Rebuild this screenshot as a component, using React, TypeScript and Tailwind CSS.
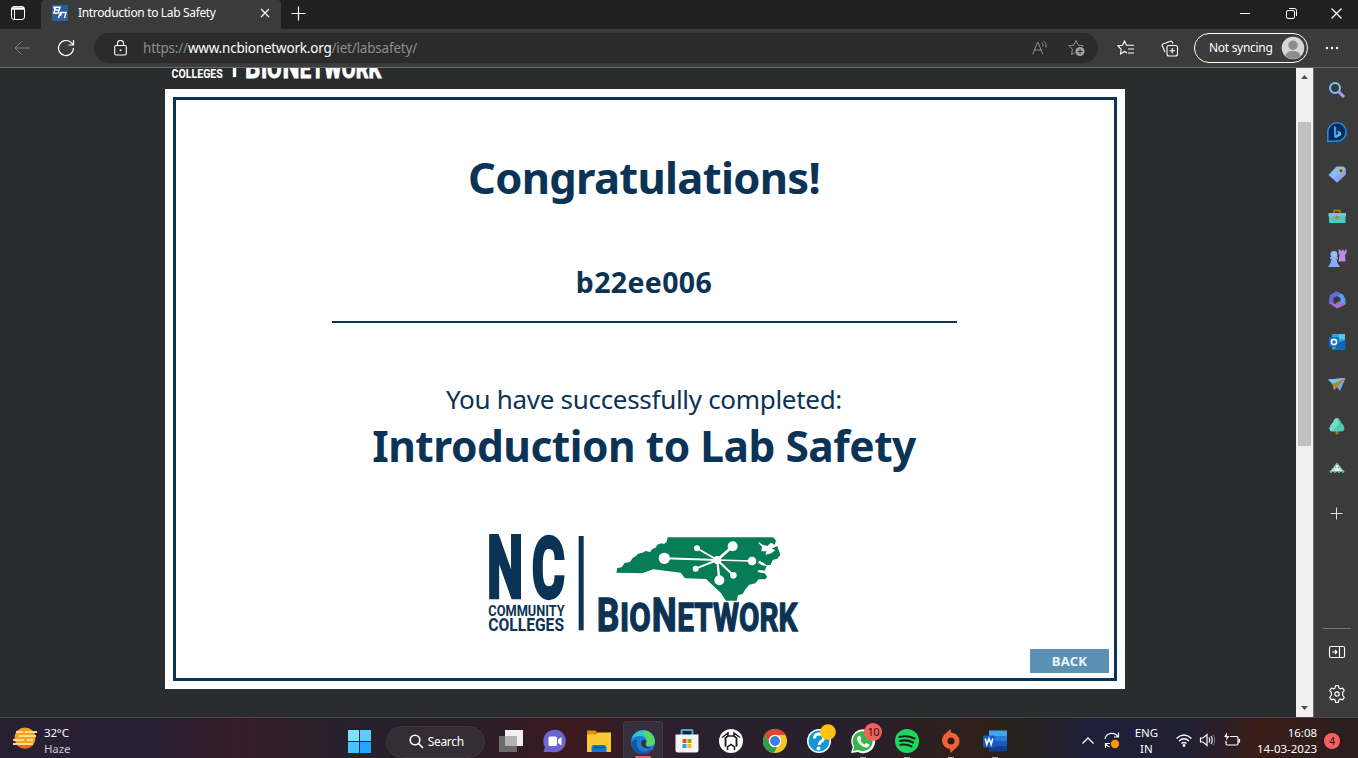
import type { ReactNode } from "react";

type IconProps = { w?: number; h?: number; vb?: string; children: ReactNode; className?: string };

function Svg({ w = 20, h = 20, vb, children, className = "" }: IconProps) {
  return (
    <svg width={w} height={h} viewBox={vb ?? `0 0 ${w} ${h}`} fill="none" className={`block shrink-0 ${className}`}>
      {children}
    </svg>
  );
}

const logoFont = "Roboto, 'Liberation Sans', sans-serif";

function LogoBase({ color }: { color: string }) {
  return (
    <g fill={color} fontFamily={logoFont} fontWeight="700" stroke={color}>
      <text x="55" y="334" fontSize="56" strokeWidth="0" textLength="227" lengthAdjust="spacingAndGlyphs">COLLEGES</text>
      <rect x="326" y="48" width="15" height="283" stroke="none" />
      <text x="380" y="333" fontSize="141" strokeWidth="4" textLength="68" lengthAdjust="spacingAndGlyphs">B</text>
      <text x="450" y="333" fontSize="115" strokeWidth="4" textLength="92" lengthAdjust="spacingAndGlyphs">IO</text>
      <text x="545" y="333" fontSize="141" strokeWidth="4" textLength="75" lengthAdjust="spacingAndGlyphs">N</text>
      <text x="622" y="333" fontSize="115" strokeWidth="4" textLength="360" lengthAdjust="spacingAndGlyphs">ETWORK</text>
    </g>
  );
}

function HeaderLogo() {
  return (
    <svg width="231" height="20" viewBox="0 260 1020 88" className="block shrink-0">
      <LogoBase color="#ffffff" />
    </svg>
  );
}

const nodes = [
  [583, 115, 17, 6],
  [681, 85, 9, 5],
  [788, 79, 15, 8],
  [846, 123, 13, 5],
  [790, 166, 10, 6],
  [748, 181, 15, 7],
  [677, 146, 9, 6],
];

function CertificateLogo() {
  const color = "#0b3355";
  return (
    <svg width="340" height="125" viewBox="0 0 1020 375" className="block shrink-0">
      <path
        fill="#067d56"
        d="M439 158L442 144 455 142 464 129 480 126 488 114 498 108 504 101 518 98 526 93 540 96 548 86 556 84 562 74 574 70 582 72 590 66 593 52 910 52 918 62 914 74 903 68 892 78 878 74 866 66 866 70 876 80 874 94 890 94 886 104 904 100 916 90 904 86 922 78 928 96 931 104 922 116 908 120 902 134 890 136 880 128 868 122 864 128 876 136 890 138 884 152 866 150 862 156 884 160 892 170 886 178 866 178 856 190 838 194 826 208 818 222 804 226 800 242 768 242 752 218 728 196 708 177 645 175 632 158 550 148 516 160z"
      />
      {nodes.map(([x, y, r, s]) => (
        <g key={`${x}-${y}`}>
          <line x1="742" y1="120" x2={x} y2={y} stroke="#fff" strokeWidth={s} />
          <circle cx={x} cy={y} r={r} fill="#fff" />
        </g>
      ))}
      <circle cx="742" cy="120" r="12" fill="#fff" />
      <g fill={color} fontFamily={logoFont} fontWeight="700" stroke={color}>
        <text x="52" y="231" fontSize="253" strokeWidth="13" textLength="107" lengthAdjust="spacingAndGlyphs">N</text>
        <text x="186" y="232" fontSize="251" strokeWidth="13" textLength="98" lengthAdjust="spacingAndGlyphs">C</text>
        <text x="55" y="287" fontSize="43" strokeWidth="0" textLength="229" lengthAdjust="spacingAndGlyphs">COMMUNITY</text>
      </g>
      <LogoBase color={color} />
    </svg>
  );
}

function TabBar() {
  return (
    <div className="flex h-[29px] items-stretch bg-[#202020]">
      <div className="flex w-[41px] items-center pl-[10px] pb-[3px]">
        <Svg w={16} h={16}>
          <rect x="1.5" y="1.5" width="13" height="13" rx="2.5" stroke="#fff" />
          <path d="M2 3.500h12" stroke="#fff" strokeWidth="2.500" />
          <path d="M4.500 3v11.500" stroke="#fff" />
        </Svg>
      </div>
      <div className="flex w-[240px] items-center rounded-t-[4px] bg-[#3b3b3b] pl-[11px] pb-[3px]">
        <Svg w={16} h={16}>
          <rect width="16" height="16" fill="#2d5f9e" />
          <path d="M2 2.200h6L7 5H3zM3.500 2.200L1.800 8h4.500L7 5M8.500 7L6.500 13M8 7.500h6L12.500 13M9.500 7l-1 4" stroke="#fff" strokeWidth="1.400" />
        </Svg>
        <span className="ml-[10px] w-[181px] whitespace-nowrap font-['Noto_Sans',sans-serif] text-[12px] tracking-[-0.34px] text-white">
          Introduction to Lab Safety
        </span>
        <Svg w={10} h={10} className="ml-[1px]">
          <path d="M1 1l8 8M9 1l-8 8" stroke="#fff" strokeWidth="1.200" />
        </Svg>
      </div>
      <div className="flex w-[34px] items-center justify-center pb-[3px]">
        <Svg w={15} h={15}>
          <path d="M7.500 0.500v14M0.500 7.500h14" stroke="#fff" strokeWidth="1.200" />
        </Svg>
      </div>
      <div className="ml-auto flex items-center pb-[3px]">
        <div className="flex w-[46px] justify-center">
          <Svg w={10} h={10}><path d="M0 5.500h10" stroke="#fff" /></Svg>
        </div>
        <div className="flex w-[46px] justify-center">
          <Svg w={11} h={11}>
            <rect x="0.500" y="2.500" width="8" height="8" rx="1.500" stroke="#fff" />
            <path d="M3 0.500h5.500a2 2 0 0 1 2 2V8" stroke="#fff" />
          </Svg>
        </div>
        <div className="flex w-[44px] justify-center">
          <Svg w={11} h={11}><path d="M0.500 0.500l10 10M10.500 0.500l-10 10" stroke="#fff" strokeWidth="1.200" /></Svg>
        </div>
      </div>
    </div>
  );
}

function Toolbar() {
  return (
    <div className="flex h-[39px] items-center border-b border-[#6b6b6b] bg-[#3b3b3b]">
      <div className="flex w-11 justify-center">
        <Svg w={16} h={14}><path d="M16 7H1M7.500 0.500L1 7l6.500 6.500" stroke="#858585" /></Svg>
      </div>
      <div className="flex w-11 justify-center">
        <Svg w={18} h={18}>
          <path d="M16.500 9a7.500 7.500 0 1 1-2.300-5.400L16 5.500M16.500 1v5h-5" stroke="#fff" strokeWidth="1.200" />
        </Svg>
      </div>
      <div className="ml-[6px] flex h-[30px] w-[1004px] items-center rounded-full bg-[#2b2b2b]">
        <div className="flex w-[49px] justify-center pl-[3px]">
          <Svg w={13} h={16}>
            <rect x="0.700" y="5.500" width="11.600" height="9.500" rx="1.500" stroke="#fff" strokeWidth="1.100" />
            <path d="M3.500 5.500V3.500a3 3 0 0 1 6 0v2" stroke="#fff" strokeWidth="1.100" />
            <circle cx="6.500" cy="10.200" r="1" fill="#fff" />
          </Svg>
        </div>
        <span className="whitespace-nowrap font-['Noto_Sans',sans-serif] text-[13.5px] tracking-[-0.2px] text-[#8e8e8e]">
          https://<span className="text-white">www.ncbionetwork.org</span>/iet/labsafety/
        </span>
        <div className="ml-auto flex w-[37px] justify-center">
          <Svg w={16} h={16}>
            <path d="M0.800 14L5.500 2.500h.6L10.800 14M2.500 10h6.600M9.500 2.500q2 1.500 1.500 4M11.500 0.800q3.500 2.500 2.500 6.700" stroke="#909090" />
          </Svg>
        </div>
        <div className="mr-[3px] flex w-[37px] justify-center">
          <Svg w={19} h={18}>
            <path d="M9 1.500l2.200 4.700 5 .6-3.700 3.500 1 5.200L9 13l-4.500 2.500 1-5.200L1.800 6.800l5-.6z" stroke="#909090" />
            <circle cx="13" cy="12.500" r="5.600" fill="#2b2b2b" />
            <circle cx="13" cy="12.500" r="4.600" fill="#a0a0a0" />
            <path d="M13 10v5M10.500 12.500h5" stroke="#2b2b2b" />
          </Svg>
        </div>
      </div>
      <div className="ml-[6px] flex w-11 justify-center">
        <Svg w={18} h={17}>
          <path d="M10 13l-2.500-1.500L3.500 14l.7-4.700L1 6l4.500-.7L7.500 1l2 4.300h7.500M11 9h6M11 13h6" stroke="#fff" strokeWidth="1.100" />
        </Svg>
      </div>
      <div className="flex w-11 justify-center">
        <Svg w={18} h={17}>
          <rect x="6" y="5.500" width="10.500" height="10.500" rx="2" stroke="#fff" strokeWidth="1.100" />
          <path d="M11.200 8v5.500M8.500 10.700H14M12 3.500L11.300 2a1.500 1.500 0 0 0-2-.8L2 4a1.500 1.500 0 0 0-.7 2l2.700 6" stroke="#fff" strokeWidth="1.100" />
        </Svg>
      </div>
      <div className="ml-[2px] flex h-[30px] w-[114px] items-center rounded-full border border-white pl-[14px]">
        <span className="w-[72px] whitespace-nowrap font-['Noto_Sans',sans-serif] text-[12px] tracking-[-0.3px] text-white">Not syncing</span>
        <Svg w={24} h={24}>
          <circle cx="12" cy="12" r="11.300" fill="#d8d5d2" />
          <circle cx="12" cy="9.300" r="4.700" fill="#8f8b88" />
          <path d="M4.500 20a7.500 5 0 0 1 15 0a11 11 0 0 1-15 0z" fill="#8f8b88" />
        </Svg>
      </div>
      <div className="flex w-12 justify-center">
        <Svg w={14} h={4}>
          <circle cx="2" cy="2" r="1.200" fill="#fff" /><circle cx="7" cy="2" r="1.200" fill="#fff" /><circle cx="12" cy="2" r="1.200" fill="#fff" />
        </Svg>
      </div>
    </div>
  );
}

function Certificate() {
  return (
    <div className="ml-[165px] h-[600px] w-[960px] bg-white p-2">
      <div className="flex h-full flex-col items-center border-[3px] border-[#0b3355] pr-[2px] font-['Noto_Sans',sans-serif] text-[#0b3355]">
        <h1 className="mt-[47px] h-[60px] whitespace-nowrap text-[43.5px] leading-[60px] font-bold tracking-[-0.7px]">Congratulations!</h1>
        <p className="mt-[55px] h-10 whitespace-nowrap text-[28.5px] leading-10 font-bold tracking-[0.35px]">b22ee006</p>
        <div className="mt-[19px] h-[2px] w-[625px] bg-[#0b3355]" />
        <p className="mt-[56px] h-10 whitespace-nowrap text-[26px] leading-10 tracking-[-0.3px]">You have successfully completed:</p>
        <h2 className="mt-[2px] h-[50px] whitespace-nowrap text-[42.5px] leading-[50px] font-bold tracking-[-0.5px]">Introduction to Lab Safety</h2>
        <div className="mt-[49px] mr-[8px]">
          <CertificateLogo />
        </div>
        <button className="mt-1 mr-[3px] ml-auto h-6 w-[79px] bg-[#5b92b3] text-[13px] leading-6 font-bold tracking-[0.3px] text-[#eef5f9]">BACK</button>
      </div>
    </div>
  );
}

function Scrollbar() {
  return (
    <div className="flex w-[17px] flex-col items-center bg-[#f1f1f1]">
      <Svg w={7} h={4} className="mt-[7px]"><path d="M3.500 0L7 4H0z" fill="#505050" /></Svg>
      <div className="mt-[43px] h-[324px] w-[13px] bg-[#c1c1c1]" />
      <Svg w={7} h={4} className="mt-auto mb-[7px]"><path d="M3.500 4L7 0H0z" fill="#505050" /></Svg>
    </div>
  );
}

const sideIcons: ReactNode[] = [
  <>
    <circle cx="8" cy="8" r="5" stroke="#7cc4f8" strokeWidth="2" />
    <path d="M12 12l5 5" stroke="#b79af0" strokeWidth="3" />
  </>,
  <>
    <path d="M0.800 19.200V10A9.200 9.200 0 1 1 10 19.200z" fill="#0a2a55" stroke="#1d8fe6" strokeWidth="1.600" />
    <path d="M7 4l2.200 1v8l-2.200 2z" fill="#3aa0f5" />
    <path d="M7 15l2.200-2 2.300-1.300-1.500-3.200 4 1.700v3L9 16z" fill="#4cc0f8" />
  </>,
  <>
    <path d="M9.500 2.500h7L18.500 4.500v6L10 18.500 1.500 11z" fill="#86bdf8" />
    <path d="M18.500 5v5.500L10 18.500l-4-3.700z" fill="#8aa6f5" />
    <circle cx="14" cy="6.700" r="1.800" fill="#5c2e10" stroke="#f0a30a" />
  </>,
  <>
    <path d="M7 7V4.500h6V7" stroke="#b58222" strokeWidth="1.400" />
    <rect x="2" y="7" width="16.500" height="10" rx="1" fill="#4cc9c0" />
    <path d="M1.500 7h17.500v3.500H1.500z" fill="#7cbcf3" />
    <circle cx="10" cy="11.500" r="1.900" fill="#b8861d" />
  </>,
  <>
    <path d="M11.500 1.500h2V3H15V1.500h1.500V3H18V1.500h1.500v4l-1.500 1 .5 7H11.500l1-7-1-1z" fill="#c389e8" />
    <circle cx="7" cy="6.500" r="3.400" fill="#8fc1fa" />
    <path d="M3 9h8v1.800H9.500l1 4.200 2.500 4H1l2.500-4 1-4.200H3z" fill="#86adf8" />
  </>,
  <>
    <path d="M9 1.500l7 3 2.500 5v5l-5-2.500V8L8 4.500z" fill="#4ea8f0" />
    <path d="M9 1.500L3 5 1.500 13l5 2V8L14 4z" fill="#6b66d5" />
    <path d="M2 13l8 5.500 8.500-4-5.500-3.500-5 3-3-1.500z" fill="#a770cf" />
  </>,
  <>
    <rect x="5" y="2" width="13" height="15.500" rx="1" fill="#2aa7e8" />
    <path d="M12 10l6.500-2v9.500H8z" fill="#1267b4" />
    <path d="M12 2h6v5h-6z" fill="#52c7f7" />
    <rect x="2" y="5" width="10" height="10" rx="1" fill="#0f6cc9" />
    <circle cx="7" cy="10" r="2.600" stroke="#fff" strokeWidth="1.600" />
  </>,
  <>
    <path d="M1 5.500L18.500 4 13 17l-3-4-3 3-1.500-6z" fill="#72a9f7" />
    <path d="M1 5.500L18.500 4 5.500 10z" fill="#74c8ef" />
    <path d="M18.500 4L5.500 10 7 16l3-3z" fill="#bd8423" />
  </>,
  <>
    <rect x="8.500" y="14" width="3" height="4.500" rx="1" fill="#a9721c" />
    <path d="M10 2q2.500 0 4 4.500 3.500 3 3.500 6.500-.5 2.500-3.500 2.500H6q-3 0-3.500-2.500 0-3.500 3.500-6.500 1.500-4.500 4-4.500z" fill="#4ec9b4" />
    <path d="M10 2q-2.500 0-4 4.500Q2.500 9.500 2.500 13q.5 2.500 3.500 2.500l6-8.500z" fill="#76dbca" />
  </>,
  <>
    <path d="M10 5.500L3.500 13.500h13z" fill="#fff" />
    <path d="M8 8.500h1.500v2H8zM10.800 8.500h1.500v2h-1.500zM6 12.500l1-2 1 2zM12 12.500l1-2 1 2z" fill="#f09a32" />
    <path d="M10 5.500l7.500 9M10 5.500l-7.500 9" stroke="#49c9cf" strokeWidth="1.500" strokeDasharray="2 1" />
    <path d="M3 14h14" stroke="#49c9cf" strokeWidth="1.500" strokeDasharray="2 2" />
  </>,
];

function Sidebar() {
  return (
    <div className="flex w-[45px] flex-col items-center border-l border-[#6b6b6b] bg-[#3b3b3b] pt-px">
      {sideIcons.map((icon, i) => (
        <div key={i} className="flex h-[42px] items-center pl-px">
          <Svg w={20} h={20}>{icon}</Svg>
        </div>
      ))}
      <Svg w={13} h={13} className="mt-[18px]"><path d="M6.500 0.500v12M0.500 6.500h12" stroke="#e0e0e0" /></Svg>
      <div className="mt-auto mb-[14px] ml-px h-px w-7 bg-[#787878]" />
      <Svg w={18} h={18} className="mb-[23px] ml-px">
        <rect x="1.500" y="3.500" width="15" height="11" rx="1.500" stroke="#fff" strokeWidth="1.100" />
        <path d="M11.500 3.500v11M4 9h5M7 7l2 2-2 2" stroke="#fff" strokeWidth="1.100" />
      </Svg>
      <Svg w={20} h={20} vb="0 0 24 24" className="mb-[13px] ml-px">
        <path
          d="M14.300 4.800L13.700 2h-3.400l-.6 2.800-1.700 1-2.800-.9-1.900 3L5.300 10v3.500L3.300 16l1.900 3 2.800-.9 1.700 1 .6 2.900h3.400l.6-2.900 1.700-1 2.800.9 1.900-3-2-2.500V10l2-2.100-1.900-3-2.800.9z"
          stroke="#fff" strokeWidth="1.400" strokeLinejoin="round"
        />
        <circle cx="12" cy="12" r="2.600" stroke="#fff" strokeWidth="1.400" />
      </Svg>
    </div>
  );
}

const apps: { icon: ReactNode; mark?: string; active?: boolean }[] = [
  {
    icon: <>
      <rect x="8" y="2" width="18" height="16" fill="#f1f1f1" />
      <rect x="2" y="8" width="18" height="16" fill="#6c6a6c" />
      <rect x="8" y="8" width="12" height="10" fill="#b4b2b3" />
    </>,
  },
  {
    icon: <>
      <path d="M2.500 24l1.500-5a11.300 11.300 0 1 1 7 5z" fill="#6a66cf" />
      <rect x="7.500" y="8.500" width="8.500" height="9.500" rx="1.500" fill="#fff" />
      <path d="M17 11.500l3.500-2.500v8.500L17 15z" fill="#fff" />
    </>,
  },
  {
    icon: <>
      <path d="M2 2.500h8.500l2 2.500V9H2z" fill="#d79600" />
      <path d="M2 6.500h9l2-2h13V24H2z" fill="#fcc934" />
      <path d="M6.500 24v-5l1.500-2h12l1.500 2v5z" fill="#1378cc" />
      <path d="M9 19.500h10" stroke="#0b5498" strokeWidth="1.500" />
    </>,
  },
  {
    active: true,
    icon: <>
      <circle cx="14" cy="13" r="12" fill="#1c7fd4" />
      <path d="M2.500 10A12 12 0 0 1 26 12.500q-.5 4.500-6 4.500-3.500 0-3-2 1-1.500 1-3Q17 7 11 7q-5 0-8.500 3z" fill="#35c1d8" />
      <path d="M15 1.200A12 12 0 0 1 26 12.500q-.5 4.500-6 4.500-3.500 0-3-2 1-1.500 1-3 0-3-3-5z" fill="#57d66b" />
      <path d="M8.500 10.500Q6 17 10.500 21t13-1.500Q19 26 12 24.800 3 22 2.500 14q2-4 6-3.500z" fill="#1553a5" />
      <path d="M14.500 10.500q-3.500 2-2 6 2.500 3.500 7.500 3 2-.2 3.500-1-7 1-7-3.500.7-1.500.7-3-1-1.700-2.700-1.500z" fill="#372f3c" />
    </>,
  },
  {
    icon: <>
      <path d="M8.500 8V3q0-1 1-1h9q1 0 1 1v5" stroke="#36aee8" strokeWidth="2" />
      <path d="M2.500 6.500h23V22q0 2.500-2.500 2.500H5Q2.500 24.500 2.500 22z" fill="#f4f4f4" />
      <path d="M9.500 11h4v4h-4z" fill="#ef5023" /><path d="M14.500 11h4v4h-4z" fill="#7eb900" />
      <path d="M9.500 16h4v4h-4z" fill="#22a4ec" /><path d="M14.500 16h4v4h-4z" fill="#fcb813" />
    </>,
  },
  {
    icon: <>
      <circle cx="14" cy="13" r="12" fill="#fff" />
      <path d="M5 9.500L11 5v3l-2.500 2v8.500M23 9.500L17 5v3l2.500 2v8.500" stroke="#1e1c22" strokeWidth="1.500" />
      <path d="M8.500 18.500V10L11 8h6l2.500 2v8.500" stroke="#1e1c22" strokeWidth="1.500" />
      <path d="M10.500 22v-3l3.500-2.500 3.500 2.500v3" stroke="#1e1c22" strokeWidth="1.500" />
    </>,
  },
  {
    icon: <>
      <circle cx="14" cy="13" r="12" fill="#f9c61f" />
      <path d="M3.600 7A12 12 0 0 1 24.400 7H14a6 6 0 0 0-5.200 9z" fill="#dd4434" />
      <path d="M3.600 7l5.200 9a6 6 0 0 0 7.500 2.600L13 25A12 12 0 0 1 3.600 7z" fill="#2c9e50" />
      <circle cx="14" cy="13" r="6.300" fill="#fff" /><circle cx="14" cy="13" r="4.900" fill="#3f7de8" />
    </>,
  },
  {
    icon: <>
      <circle cx="14" cy="13" r="12" fill="#fff" /><circle cx="14" cy="13" r="10.500" fill="#1296d6" />
      <path d="M9.500 10.500q0-4.500 4.700-4.500 4.500 0 4.500 4 0 2-2.500 3.500Q14 15 14 17" stroke="#fff" strokeWidth="2.800" />
      <circle cx="13.500" cy="20.500" r="2" fill="#fff" /><circle cx="23" cy="4" r="7.800" fill="#ffc20d" />
    </>,
  },
  {
    mark: "10",
    icon: <>
      <path d="M2 25l1.700-6A12 12 0 1 1 9 24z" fill="#fff" />
      <path d="M4 23l1.200-4.500A10 10 0 1 1 9 22z" fill="#34b64a" />
      <path d="M9 8.500l2-1 1.500 3.500-1 1.500q1.500 3 4 4l1.500-1.500 3.500 1.500q0 3-3.500 3-3.500-.5-6-3T8 11q0-1.500 1-2.500z" fill="#fff" />
    </>,
  },
  {
    icon: <>
      <circle cx="14" cy="13" r="12" fill="#1ed760" />
      <path d="M6.500 9q7.500-2 15 1.500M7 13q7-1.700 13 1.500M7.500 16.800q6-1.200 11 1.500" stroke="#15251a" strokeWidth="2.100" strokeLinecap="round" />
    </>,
  },
  {
    icon: <>
      <path d="M13.500 1l.5 3.500a8.700 8.700 0 0 1 8.500 8.500q0 4-3.500 7l-5.500 5-.5-4A8.700 8.700 0 0 1 5 13q0-4.500 3.500-7.500z" fill="#ee6335" />
      <circle cx="14" cy="13" r="3.500" fill="#2b1c1c" />
    </>,
  },
  {
    icon: <>
      <path d="M8 2.500h18v5.500H8z" fill="#41a5ee" /><path d="M8 8h18v5H8z" fill="#2b7cd3" />
      <path d="M8 13h18v5.500H8z" fill="#185abd" /><path d="M8 18.500h18V23.500H8z" fill="#103f91" />
      <rect x="2" y="7.500" width="12" height="12" rx="1" fill="#185abd" />
      <path d="M4.300 10.500l1.500 6 2.200-6 2.200 6 1.500-6" stroke="#fff" strokeWidth="1.500" />
    </>,
  },
];

function Taskbar() {
  return (
    <div className="flex h-[41px] items-center border-t border-[#4a464c] bg-[linear-gradient(90deg,#281f33_0px,#281f33_150px,#361c29_245px,#27202d_350px,#2b1e28_480px,#3c191f_570px,#2a1f2d_690px,#281f2c_840px,#2f2019_980px,#24201f_1030px,#1f1f3a_1090px,#211f33_1190px,#3a1d17_1260px,#281d20_1358px)] font-['Noto_Sans',sans-serif] text-white">
      <div className="flex w-[341px] items-center pl-3">
        <Svg w={26} h={24}>
          <circle cx="13" cy="12" r="10.500" fill="#f7a416" />
          <path d="M4 17.500a10.500 10.500 0 0 0 18 0z" fill="#ec6b10" />
          <path d="M4 6h7M13 6h12M7 10h17M1 14h11M15 14h6M1 18h20" stroke="#f6d9a2" strokeWidth="1.800" />
        </Svg>
        <div className="ml-[6px] pt-[5px] text-[11.5px] leading-4 tracking-[-0.15px]">
          <div>32°C</div>
          <div className="text-[#c9c6cc]">Haze</div>
        </div>
      </div>
      <div className="flex w-[46px] pl-2 pt-[6px]">
        <div className="grid grid-cols-2 gap-px">
          <div className="h-[11px] w-[11px] bg-[#79e4fb]" /><div className="h-[11px] w-[11px] bg-[#5bcdfa]" />
          <div className="h-[11px] w-[11px] bg-[#45c4fb]" /><div className="h-[11px] w-[11px] bg-[#1fa6f8]" />
        </div>
      </div>
      <div className="mr-[3px] mt-[7px] flex h-8 w-[100px] items-center rounded-full border border-[#40363d] bg-[#352c35] pl-[22px]">
        <Svg w={15} h={15}><circle cx="6" cy="6" r="4.800" stroke="#fff" strokeWidth="1.600" /><path d="M9.500 9.500l4.500 4.500" stroke="#fff" strokeWidth="1.700" /></Svg>
        <span className="ml-1 text-[12px] tracking-[-0.3px]">Search</span>
      </div>
      {apps.map((app, i) => (
        <div key={i} className="flex w-11 shrink-0 justify-center self-stretch pl-[2px]">
          <div className={`relative mt-[3px] flex h-[37px] w-10 justify-center rounded-t-[4px] pt-[7px] ${app.active ? "border border-b-0 border-[#433b46] bg-[#372f3c] pt-[6px]" : ""}`}>
            <svg width="28" height="26" viewBox="0 0 28 26" fill="none" className="block shrink-0 overflow-visible">{app.icon}</svg>
            {app.mark && (
              <span className="absolute top-[2px] right-[1px] h-[18px] w-[18px] rounded-full bg-[#f5605e] text-center text-[11px] leading-[17px] tracking-[-0.5px] text-[#201416]">{app.mark}</span>
            )}
            {app.active && <span className="absolute bottom-0 h-[2px] w-4 rounded-full bg-[#ed5f62]" />}
            {i >= 8 && <span className="absolute bottom-0 h-px w-[6px] bg-[#a7a1a7]" />}
          </div>
        </div>
      ))}
      <div className="ml-[65px] flex items-center pt-[4px]">
        <Svg w={14} h={9}><path d="M1.500 7.500L7 2l5.500 5.500" stroke="#fff" strokeWidth="1.300" /></Svg>
        <Svg w={18} h={18} className="ml-[8px]">
          <path d="M2 8a7 7 0 0 1 13-2M15.500 1.500V6H11M2.500 17v-4.500H7M2.500 12.500q1.500 3 4 3.500" stroke="#fff" strokeWidth="1.200" />
          <circle cx="12" cy="13" r="4.200" fill="#ff9800" />
        </Svg>
        <div className="ml-[9px] w-[32px] pt-[2px] text-center text-[11.5px] leading-4 tracking-[-0.1px]">ENG<br />IN</div>
        <Svg w={18} h={16} className="ml-[13px]">
          <path d="M1.500 6.500q7.500-7 15 0M4 9q5-4.500 10 0M6.500 11.500q2.500-2 5 0" stroke="#fff" strokeWidth="1.300" />
          <circle cx="9" cy="13.500" r="1.400" fill="#fff" />
        </Svg>
        <Svg w={18} h={16} className="ml-[6px]">
          <path d="M1.500 6H4l4-3.500v11L4 10H1.500zM10 5.500q1.500 2.500 0 5" stroke="#fff" strokeWidth="1.200" />
          <path d="M12 4q2.500 4 0 8" stroke="#fff" strokeWidth="1.100" /><path d="M14 2.500q3.500 5.500 0 11" stroke="#777488" />
        </Svg>
        <Svg w={18} h={16} className="ml-[6px]">
          <path d="M7 4.500h6.500q1.500 0 1.500 1.500v5.500q0 1.500-1.500 1.500h-9Q3 13 3 11.500V9M16.500 7v3.500" stroke="#fff" strokeWidth="1.200" />
          <path d="M4 0.500L1 5h2.500L3 8.500 6.500 4H4z" fill="#fff" />
        </Svg>
      </div>
      <div className="ml-auto w-[76px] pt-[5px] text-right text-[11.5px] leading-4">16:08<br />14-03-2023</div>
      <div className="mt-[6px] mr-[18px] ml-[7px] h-4 w-4 rounded-full bg-[#f5605e] text-center text-[10px] leading-4 text-[#241214]">4</div>
    </div>
  );
}

export default function App() {
  return (
    <div className="flex h-[758px] w-[1358px] flex-col overflow-hidden bg-[#292d2e]">
      <TabBar />
      <Toolbar />
      <div className="flex h-[649px]">
        <main className="w-[1296px] bg-[#292d2e]">
          <div className="h-[21px] overflow-hidden pl-[159px]">
            <div className="-mt-[7px]">
              <HeaderLogo />
            </div>
          </div>
          <Certificate />
        </main>
        <Scrollbar />
        <Sidebar />
      </div>
      <Taskbar />
    </div>
  );
}
